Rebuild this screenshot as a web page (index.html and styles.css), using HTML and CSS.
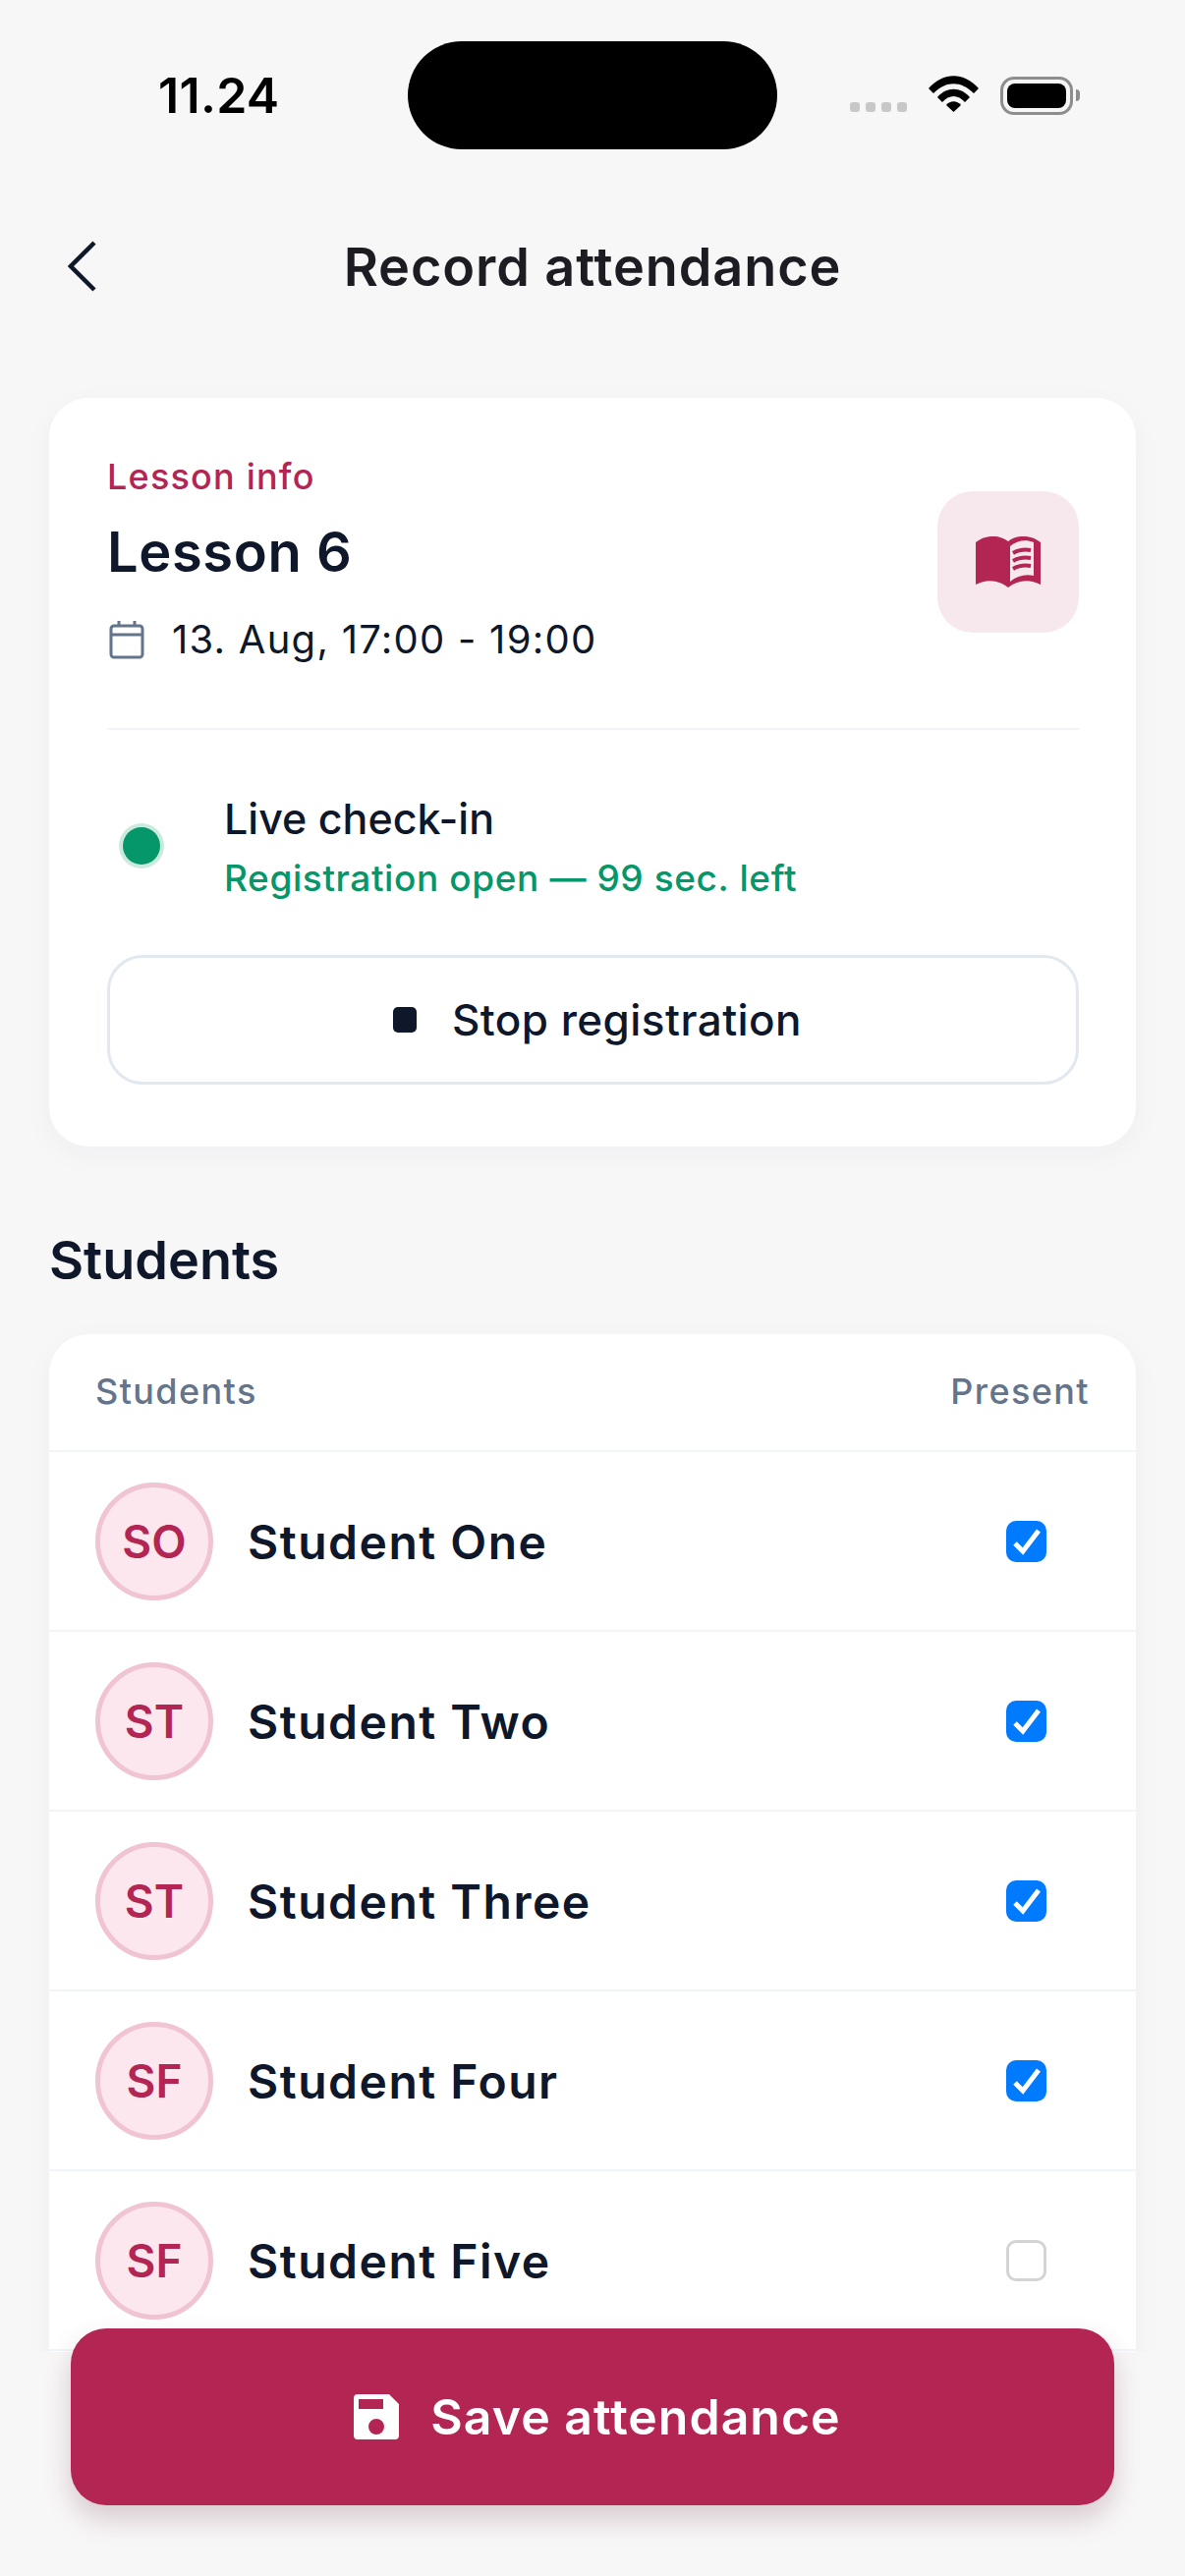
FILE: index.html
```html
<!DOCTYPE html>
<html lang="en">
<head>
<meta charset="UTF-8">
<meta name="viewport" content="width=device-width, initial-scale=1.0">
<title>Record attendance</title>
<link rel="stylesheet" href="styles.css">
</head>
<body>

<div class="screen">
    <div class="status-bar">
        <span class="time">11.24</span>
        <span class="island"></span>
        <div class="status-icons">
            <span class="signal"><i></i><i></i><i></i><i></i></span>
            <svg class="wifi" width="51" height="37" viewBox="0 0 51 37">
                <path d="M0 13 C15 -4 36 -4 51 13 L46 18 C33 5 18 5 5 18 Z"/>
                <path d="M9 22 C18 11 33 11 42 22 L37 27 C30 19 21 19 14 27 Z"/>
                <path d="M18 30 C22 25 29 25 33 30 L25.5 37 Z"/>
            </svg>
            <span class="battery"><span class="battery-fill"></span></span>
            <span class="battery-nub"></span>
        </div>
    </div>

    <div class="nav">
        <svg class="back" width="30" height="52" viewBox="0 0 30 52">
            <path d="M27 2 L3 26 L27 50" fill="none" stroke="#0f172a" stroke-width="4.5"/>
        </svg>
        <h1 class="page-title">Record attendance</h1>
    </div>

    <div class="card lesson-card">
        <div class="lesson-top">
            <div>
                <div class="eyebrow">Lesson info</div>
                <div class="lesson-name">Lesson 6</div>
                <div class="lesson-date">
                    <svg width="36" height="40" viewBox="0 0 36 40">
                        <rect x="2" y="6" width="32" height="32" rx="3" fill="none" stroke="#64748b" stroke-width="3"/>
                        <path d="M2 15 H34 M10 1 V7 M26 1 V7" fill="none" stroke="#64748b" stroke-width="3"/>
                    </svg>
                    <span>13. Aug, 17:00 - 19:00</span>
                </div>
            </div>
            <div class="lesson-icon">
                <svg width="66" height="52" viewBox="0 0 66 52">
                    <path fill="#b32553" d="M0 6 C10 -2 24 -2 33 5 C42 -2 56 -2 66 6 V49 C55 43 43 44 33 52 C23 44 11 43 0 49 Z"/>
                    <path fill="#f7e8ee" d="M35 10 C42 4 51 3 59 6 V40 C51 38 42 40 35 46 Z"/>
                    <path fill="none" stroke="#b32553" stroke-width="4" d="M38 17 C43 14 50 13 56 14 M38 25 C43 22 50 21 56 22 M38 33 C43 30 50 29 56 30"/>
                </svg>
            </div>
        </div>

        <div class="live-row">
            <span class="live-dot"></span>
            <div>
                <div class="live-title">Live check-in</div>
                <div class="live-status">Registration open — 99 sec. left</div>
            </div>
        </div>

        <button class="stop-btn"><span class="stop-icon"></span>Stop registration</button>
    </div>

    <h2 class="section-title">Students</h2>

    <div class="card student-card">
        <div class="table-head">
            <span>Students</span>
            <span>Present</span>
        </div>
        <div class="student-row">
            <span class="avatar">SO</span>
            <span class="student-name">Student One</span>
            <span class="check on"><svg width="30" height="28" viewBox="0 0 30 28"><path d="M3 16 L11 24 L27 3" fill="none" stroke="#fff" stroke-width="5"/></svg></span>
        </div>
        <div class="student-row">
            <span class="avatar">ST</span>
            <span class="student-name">Student Two</span>
            <span class="check on"><svg width="30" height="28" viewBox="0 0 30 28"><path d="M3 16 L11 24 L27 3" fill="none" stroke="#fff" stroke-width="5"/></svg></span>
        </div>
        <div class="student-row">
            <span class="avatar">ST</span>
            <span class="student-name">Student Three</span>
            <span class="check on"><svg width="30" height="28" viewBox="0 0 30 28"><path d="M3 16 L11 24 L27 3" fill="none" stroke="#fff" stroke-width="5"/></svg></span>
        </div>
        <div class="student-row">
            <span class="avatar">SF</span>
            <span class="student-name">Student Four</span>
            <span class="check on"><svg width="30" height="28" viewBox="0 0 30 28"><path d="M3 16 L11 24 L27 3" fill="none" stroke="#fff" stroke-width="5"/></svg></span>
        </div>
        <div class="student-row">
            <span class="avatar">SF</span>
            <span class="student-name">Student Five</span>
            <span class="check"></span>
        </div>
    </div>

    <div class="footer">
        <button class="save-btn">
            <svg width="46" height="46" viewBox="0 0 46 46">
                <path fill="#fff" fill-rule="evenodd" d="M4 0 H36 L46 10 V42 A4 4 0 0 1 42 46 H4 A4 4 0 0 1 0 42 V4 A4 4 0 0 1 4 0 Z M5 5 V15 H30 V5 Z M23 25 A8 8 0 1 0 23 41 A8 8 0 1 0 23 25 Z"/>
            </svg>
            Save attendance
        </button>
    </div>
</div>

</body>
</html>
```

FILE: styles.css
```css
body {
    margin: 0;
    background-color: #f8f7f8;
    color: #0f172a;
    font-family: Inter, "Noto Sans", sans-serif;
}
.screen {
    position: relative;
    width: 1206px;
    height: 2622px;
    overflow: hidden;
}

/* status bar */
.status-bar {
    display: grid;
    grid-template-columns: 415px 376px 1fr;
    align-items: center;
    height: 110px;
    padding-top: 42px;
}
.time {
    padding-left: 161px;
    font-size: 50px;
    font-weight: 600;
    color: #000;
    letter-spacing: 0.3px;
}
.island {
    height: 110px;
    border-radius: 55px;
    background-color: #000;
}
.status-icons {
    display: flex;
    align-items: center;
    padding-left: 74px;
}
.signal {
    display: flex;
    gap: 6px;
    margin-top: 24px;
}
.signal i {
    width: 10px;
    height: 10px;
    border-radius: 3px;
    background-color: #c8c8c8;
}
.wifi {
    margin-left: 22px;
    margin-top: -4px;
}
.battery {
    display: block;
    box-sizing: border-box;
    width: 74px;
    height: 39px;
    margin-left: 22px;
    padding: 4px;
    border: 3px solid #8e8e8e;
    border-radius: 14px;
}
.battery-fill {
    display: block;
    height: 100%;
    border-radius: 8px;
    background-color: #000;
}
.battery-nub {
    width: 4px;
    height: 12px;
    margin-left: 3px;
    border-radius: 0 6px 6px 0;
    background-color: #8e8e8e;
}

/* nav */
.nav {
    display: flex;
    align-items: center;
    justify-content: center;
    position: relative;
    height: 238px;
    margin-bottom: 15px;
}
.back {
    position: absolute;
    left: 69px;
    top: 93px;
}
.page-title {
    margin: 0;
    font-size: 54px;
    font-weight: 600;
    letter-spacing: 0.9px;
    color: #1c1c22;
}

/* cards */
.card {
    margin: 0 50px;
    border-radius: 40px;
    background-color: #fff;
    box-shadow: 0 8px 30px rgba(15, 23, 42, 0.04);
}
.lesson-card {
    padding: 58px 58px 63px 59px;
}
.lesson-top {
    display: flex;
    justify-content: space-between;
    align-items: flex-start;
    padding-bottom: 65px;
    border-bottom: 2px solid #f1f5f9;
}
.eyebrow {
    font-size: 36px;
    line-height: 44px;
    font-weight: 500;
    letter-spacing: 1.2px;
    color: #b32553;
}
.lesson-name {
    margin-top: 23px;
    font-size: 56px;
    line-height: 64px;
    font-weight: 600;
    letter-spacing: 0.6px;
}
.lesson-date {
    display: flex;
    align-items: center;
    gap: 28px;
    margin-top: 32px;
    padding-left: 2px;
    font-size: 40px;
    line-height: 50px;
    letter-spacing: 1.25px;
}
.lesson-icon {
    display: flex;
    align-items: center;
    justify-content: center;
    width: 144px;
    height: 144px;
    margin-top: 37px;
    border-radius: 36px;
    background-color: #f7e8ee;
}
.live-row {
    display: flex;
    align-items: center;
    gap: 65px;
    padding: 62px 0 0 16px;
}
.live-dot {
    width: 38px;
    height: 38px;
    margin-top: -2px;
    border-radius: 50%;
    background-color: #059669;
    box-shadow: 0 0 0 4px #cbeade;
}
.live-title {
    font-size: 43px;
    line-height: 56px;
    font-weight: 500;
}
.live-status {
    margin-top: 8px;
    font-size: 37px;
    line-height: 50px;
    font-weight: 500;
    letter-spacing: 0.6px;
    color: #059669;
}
.stop-btn {
    display: flex;
    align-items: center;
    justify-content: center;
    gap: 36px;
    box-sizing: border-box;
    width: 100%;
    height: 132px;
    margin-top: 53px;
    padding-left: 15px;
    border: 3px solid #e2e8f0;
    border-radius: 36px;
    background-color: #fff;
    color: #0f172a;
    font-family: inherit;
    font-size: 44px;
    font-weight: 500;
    letter-spacing: 0.45px;
}
.stop-icon {
    width: 24px;
    height: 26px;
    border-radius: 5px;
    background-color: #0f172a;
}
.section-title {
    margin: 81px 50px 40px;
    font-size: 54px;
    line-height: 70px;
    font-weight: 600;
}

/* student table */
.student-card {
    padding-bottom: 40px;
}
.table-head {
    display: flex;
    justify-content: space-between;
    box-sizing: border-box;
    height: 120px;
    padding: 36px 47px 0;
    border-bottom: 2px solid #f1f5f9;
    font-size: 36px;
    line-height: 44px;
    font-weight: 500;
    letter-spacing: 1.4px;
    color: #64748b;
}
.student-row {
    display: flex;
    align-items: center;
    gap: 35px;
    box-sizing: border-box;
    height: 183px;
    padding: 0 91px 0 47px;
    border-bottom: 2px solid #f1f5f9;
}
.avatar {
    display: flex;
    align-items: center;
    justify-content: center;
    box-sizing: border-box;
    width: 120px;
    height: 120px;
    border: 5px solid #f0c4d2;
    border-radius: 50%;
    background-color: #fce7ef;
    color: #b32553;
    font-size: 46px;
    font-weight: 600;
}
.student-name {
    flex: 1;
    padding-top: 2px;
    font-size: 48px;
    font-weight: 600;
    letter-spacing: 1.5px;
}
.check {
    display: flex;
    align-items: center;
    justify-content: center;
    box-sizing: border-box;
    width: 41px;
    height: 42px;
    border: 3px solid #d4d4d4;
    border-radius: 10px;
}
.check.on {
    border: none;
    background-color: #007aff;
}

/* floats over the list */
.footer {
    position: absolute;
    left: 0;
    right: 0;
    bottom: 0;
    height: 228px;
    padding: 0 72px;
    background-color: #f8f7f8;
}
.save-btn {
    display: flex;
    align-items: center;
    justify-content: center;
    gap: 32px;
    box-sizing: border-box;
    width: 100%;
    height: 180px;
    margin-top: -24px;
    padding-left: 16px;
    border: none;
    border-radius: 36px;
    background-color: #b32553;
    box-shadow: 0 14px 28px rgba(100, 40, 60, 0.22);
    color: #fff;
    font-family: inherit;
    font-size: 50px;
    font-weight: 600;
    letter-spacing: 1px;
}
```
